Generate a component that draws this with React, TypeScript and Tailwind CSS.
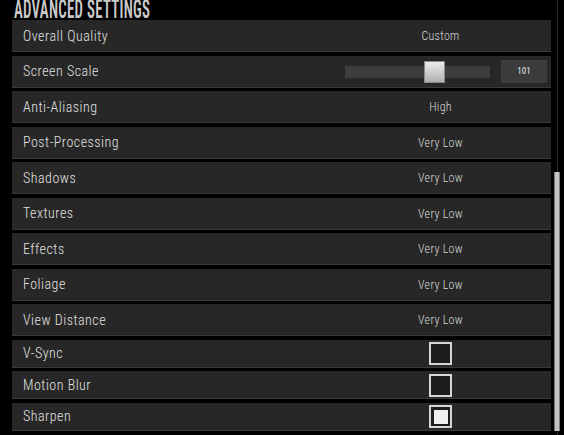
import React from "react";

const font = { fontFamily: '"Liberation Sans Narrow", "Roboto Condensed", Roboto, sans-serif' };

type Row =
  | { label: string; kind: "select"; value: string }
  | { label: string; kind: "slider"; value: number }
  | { label: string; kind: "check"; checked: boolean };

const rows: Row[] = [
  { label: "Overall Quality", kind: "select", value: "Custom" },
  { label: "Screen Scale", kind: "slider", value: 101 },
  { label: "Anti-Aliasing", kind: "select", value: "High" },
  { label: "Post-Processing", kind: "select", value: "Very Low" },
  { label: "Shadows", kind: "select", value: "Very Low" },
  { label: "Textures", kind: "select", value: "Very Low" },
  { label: "Effects", kind: "select", value: "Very Low" },
  { label: "Foliage", kind: "select", value: "Very Low" },
  { label: "View Distance", kind: "select", value: "Very Low" },
  { label: "V-Sync", kind: "check", checked: false },
  { label: "Motion Blur", kind: "check", checked: false },
  { label: "Sharpen", kind: "check", checked: true },
];

function Slider({ value }: { value: number }) {
  return (
    <div className="flex w-full items-center pl-[15px] pr-[4px]">
      <div className="relative h-[12px] w-[145px] bg-[#3d3d3d]">
        <div className="absolute left-[79px] top-[-5px] h-[22px] w-[21px] border border-[#8a8a8a] bg-gradient-to-b from-[#ececec] to-[#b0b0b0]" />
      </div>
      <div className="ml-[11px] flex h-[23px] w-[46px] items-center justify-center bg-[#3b3b3b] text-[9px] text-[#e8e8e8]">
        {value}
      </div>
    </div>
  );
}

function Checkbox({ checked }: { checked: boolean }) {
  return (
    <div className="flex h-[23px] w-[23px] items-center justify-center border-2 border-[#d6d6d6] bg-[#1d1d1d]">
      {checked && <div className="h-[14px] w-[14px] bg-[#efefef]" />}
    </div>
  );
}

export default function App() {
  return (
    <div className="flex h-[435px] w-[564px] overflow-hidden bg-black" style={font}>
      {/* Settings list */}
      <div className="flex w-[551px] flex-col pl-[12px]">
        <div className="h-[20px] overflow-hidden pl-[2px]">
          <div className="-mt-[4px] origin-left scale-x-[0.57] whitespace-nowrap text-[26px] font-semibold leading-[26px] tracking-[0.5px] text-[#c9c9c9]">
            ADVANCED SETTINGS
          </div>
        </div>
        <div className="flex flex-col gap-[3.5px]">
          {rows.map((row) => (
            <div
              key={row.label}
              className={`flex items-center border-b border-[#3a3a3a] bg-[#272727] pt-[1px] ${
                row.kind === "check" ? "h-[28px]" : "h-[32px]"
              }`}
            >
              <div className="flex-1 pl-[11px] text-[14px] font-light tracking-[0.5px] text-[#e2e2e2]">{row.label}</div>
              <div className="flex w-[221px] items-center justify-center">
                {row.kind === "select" && (
                  <span className="text-[12px] font-light tracking-[0.3px] text-[#dadada]">{row.value}</span>
                )}
                {row.kind === "slider" && <Slider value={row.value} />}
                {row.kind === "check" && <Checkbox checked={row.checked} />}
              </div>
            </div>
          ))}
        </div>
      </div>

      {/* Scrollbar */}
      <div className="relative flex-1">
        <div className="absolute left-[6px] top-0 h-full w-px bg-[#242424]" />
        <div className="absolute left-[3px] top-[172px] h-[259px] w-[6px] border-x border-[#7a7a7a] bg-[#c2c2c2]" />
      </div>
    </div>
  );
}
